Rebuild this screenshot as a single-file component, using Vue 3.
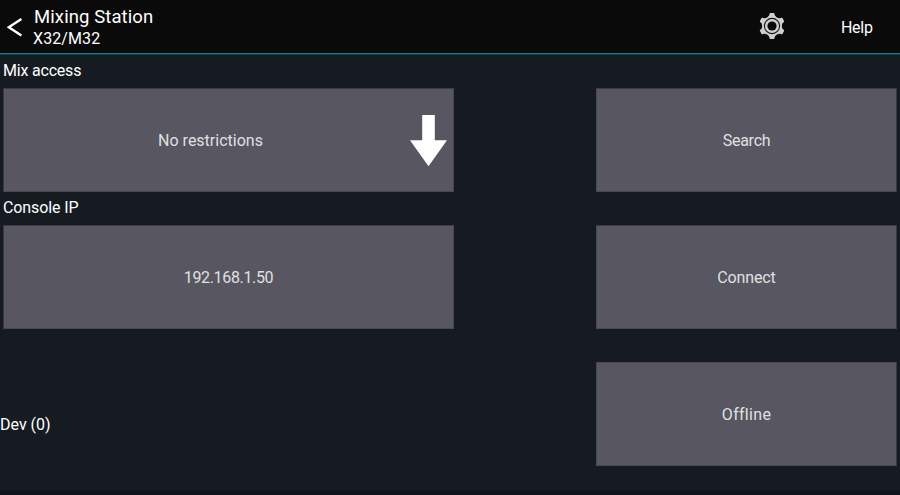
<script setup>
const actions = ['Search', 'Connect', 'Offline']
const fields = [
  { label: 'Mix access', value: 'No restrictions', select: true, key: 'access' },
  { label: 'Console IP', value: '192.168.1.50', select: false, key: 'ip' },
]
</script>

<template>
  <div class="app">
    <header class="bar">
      <button class="back" aria-label="Back">
        <svg width="16" height="20" viewBox="0 0 16 20"><path d="M14.4 1.9 L1.8 10.2 L14.4 18.5" fill="none" stroke="#fff" stroke-width="2.4" /></svg>
      </button>
      <div class="titles">
        <h1><span>Mixing Station</span></h1>
        <p><span>X32/M32</span></p>
      </div>
      <button class="gear" aria-label="Settings">
        <svg width="26" height="28" viewBox="-13 -14 26 28">
          <g fill="#cfcfcf">
            <circle r="9.9" />
            <path v-for="a in [0, 60, 120, 180, 240, 300]" :key="a" :transform="`rotate(${a})`" d="M-4.8 -8.3 L-2.9 -10.4 L-2.4 -12.4 Q-2.2 -13 -1.6 -13 H1.6 Q2.2 -13 2.4 -12.4 L2.9 -10.4 L4.8 -8.3 Z" />
          </g>
          <circle r="7.6" fill="none" stroke="#141414" stroke-width="1.1" />
          <circle r="4.6" fill="#0a0a0a" />
        </svg>
      </button>
      <button class="help"><span>Help</span></button>
    </header>
    <main class="content">
      <section class="fields">
        <div v-for="f in fields" :key="f.key" class="field">
          <div class="label" :class="f.key"><span>{{ f.label }}</span></div>
          <button class="tile" :class="{ select: f.select }">
            <span class="value" :class="f.key">{{ f.value }}</span>
            <svg v-if="f.select" class="arrow" width="37" height="52" viewBox="0 0 37 52"><path d="M12.2 0 H24.8 V25.3 H37 L18.5 51.3 L0 25.3 H12.2 Z" fill="#fff" /></svg>
          </button>
        </div>
        <div class="dev"><span>Dev (0)</span></div>
      </section>
      <section class="actions">
        <button v-for="a in actions" :key="a" class="tile"><span :class="a.toLowerCase()">{{ a }}</span></button>
      </section>
    </main>
    <footer class="edge"></footer>
  </div>
</template>

<style>
body { margin: 0; background: #161b22; }
</style>

<style scoped>
* { box-sizing: border-box; }
.app {
  width: 900px;
  height: 495px;
  display: flex;
  flex-direction: column;
  background: #161b22;
  color: #fff;
  font: 400 16px/20px Roboto, sans-serif;
  font-variant-ligatures: none;
  overflow: hidden;
}
button { font: inherit; font-variant-ligatures: none; color: inherit; border: 0; padding: 0; margin: 0; background: none; }
span { white-space: nowrap; }
.bar {
  height: 55px;
  flex: none;
  display: flex;
  background: #0a0a0a;
  border-bottom: 1px solid #114148;
  box-shadow: inset 0 -1px #12808c;
}
.back { width: 33px; padding: 17px 0 0 7px; display: flex; }
.titles { flex: 1; padding: 6px 0 0 1px; }
h1 { margin: 0; font-size: 18.5px; font-weight: 400; line-height: 22px; letter-spacing: 0.1px; }
p { margin: 1px 0 0 -1px; line-height: 20px; letter-spacing: 0.1px; }
.gear { width: 26px; padding-top: 12px; margin-right: 56px; display: flex; }
.help { width: 59px; text-align: left; padding-top: 2px; letter-spacing: -0.3px; }
.content { flex: 1; display: flex; justify-content: space-between; padding: 0 3px; }
.fields { width: 451px; }
.field { height: 137px; display: flex; flex-direction: column; }
.label { height: 33px; flex: none; padding-top: 6px; }
.label.access { letter-spacing: -0.2px; }
.label.ip { letter-spacing: -0.1px; }
.tile {
  height: 104px;
  display: flex;
  align-items: center;
  justify-content: center;
  background: #575661;
  border: 1px solid #484752;
  border-top-color: #3b3b46;
  padding-top: 2px;
  color: #e0e0e2;
}
.field .tile { width: 451px; border-left-color: #363740; }
.value { flex: 1; text-align: center; }
.value.ip { letter-spacing: -0.35px; }
.select { padding-right: 6px; }
.select .value { padding-left: 7px; }
.arrow { flex: none; }
.dev { margin-left: -3px; padding-top: 86px; }
.actions { width: 301px; display: flex; flex-direction: column; gap: 33px; padding-top: 33px; }
.actions .tile { width: 301px; flex: none; border-right-color: #363740; }
.actions .tile:last-child { border-top-color: #484752; }
.search { letter-spacing: -0.25px; }
.connect { letter-spacing: -0.15px; }
.offline { letter-spacing: 0.3px; }
.edge { height: 5px; flex: none; background: #12151b; }
</style>
